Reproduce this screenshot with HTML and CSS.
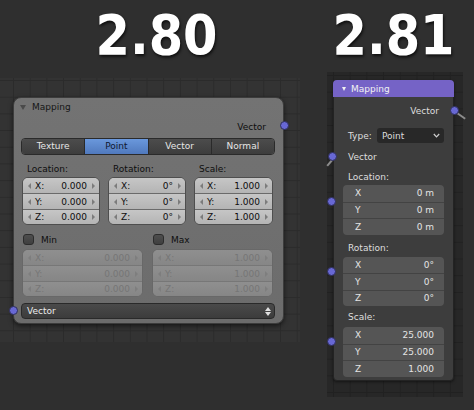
FILE: index.html
```html
<!DOCTYPE html>
<html>
<head>
<meta charset="utf-8">
<link rel="stylesheet" href="styles.css">
</head>
<body>
<div class="page">
  <div class="titles">
    <div class="title t80">2.80</div>
    <div class="title t81">2.81</div>
  </div>
  <div class="views">
    <div class="view old">
      <div class="node n280">
        <div class="hdr"><span class="tri"></span>Mapping</div>
        <div class="out-row">Vector<span class="sock sock-out"></span></div>
        <div class="tabs">
          <div class="tab">Texture</div>
          <div class="tab sel">Point</div>
          <div class="tab">Vector</div>
          <div class="tab">Normal</div>
        </div>
        <div class="cols3">
          <div class="col">
            <div class="lbl">Location:</div>
            <div class="fields">
              <div class="fld"><span class="al"></span><span class="k">X:</span><span class="v">0.000</span><span class="ar"></span></div>
              <div class="fld"><span class="al"></span><span class="k">Y:</span><span class="v">0.000</span><span class="ar"></span></div>
              <div class="fld"><span class="al"></span><span class="k">Z:</span><span class="v">0.000</span><span class="ar"></span></div>
            </div>
          </div>
          <div class="col">
            <div class="lbl">Rotation:</div>
            <div class="fields">
              <div class="fld"><span class="al"></span><span class="k">X:</span><span class="v">0°</span><span class="ar"></span></div>
              <div class="fld"><span class="al"></span><span class="k">Y:</span><span class="v">0°</span><span class="ar"></span></div>
              <div class="fld"><span class="al"></span><span class="k">Z:</span><span class="v">0°</span><span class="ar"></span></div>
            </div>
          </div>
          <div class="col">
            <div class="lbl">Scale:</div>
            <div class="fields">
              <div class="fld"><span class="al"></span><span class="k">X:</span><span class="v">1.000</span><span class="ar"></span></div>
              <div class="fld"><span class="al"></span><span class="k">Y:</span><span class="v">1.000</span><span class="ar"></span></div>
              <div class="fld"><span class="al"></span><span class="k">Z:</span><span class="v">1.000</span><span class="ar"></span></div>
            </div>
          </div>
        </div>
        <div class="cols2">
          <div class="col">
            <div class="chk"><span class="box"></span>Min</div>
            <div class="fields dis">
              <div class="fld"><span class="al"></span><span class="k">X:</span><span class="v">0.000</span><span class="ar"></span></div>
              <div class="fld"><span class="al"></span><span class="k">Y:</span><span class="v">0.000</span><span class="ar"></span></div>
              <div class="fld"><span class="al"></span><span class="k">Z:</span><span class="v">0.000</span><span class="ar"></span></div>
            </div>
          </div>
          <div class="col">
            <div class="chk"><span class="box"></span>Max</div>
            <div class="fields dis">
              <div class="fld"><span class="al"></span><span class="k">X:</span><span class="v">1.000</span><span class="ar"></span></div>
              <div class="fld"><span class="al"></span><span class="k">Y:</span><span class="v">1.000</span><span class="ar"></span></div>
              <div class="fld"><span class="al"></span><span class="k">Z:</span><span class="v">1.000</span><span class="ar"></span></div>
            </div>
          </div>
        </div>
        <div class="dd-row">
          <span class="sock sock-in"></span>
          <div class="dd">Vector<span class="updown"><span class="up"></span><span class="dn"></span></span></div>
        </div>
      </div>
    </div>
    <div class="view new">
      <div class="node n281">
        <div class="hdr2"><span class="tri2"></span>Mapping</div>
        <div class="out2">Vector<span class="sock sock-out2"></span><span class="wire wire-out"></span></div>
        <div class="type-row"><span class="type-lbl">Type:</span><div class="sel2">Point<svg class="chev" width="7" height="5" viewBox="0 0 7 5"><path d="M0.8 1 L3.5 3.8 L6.2 1" fill="none" stroke="#cfcfcf" stroke-width="1.2"/></svg></div></div>
        <div class="in2"><span class="sock sock-in2"></span><span class="wire wire-in"></span>Vector</div>
        <div class="lbl2 l-loc">Location:</div>
        <div class="fields2 f-loc">
          <span class="sock sock-side"></span>
          <div class="f2"><span>X</span><span>0 m</span></div>
          <div class="f2"><span>Y</span><span>0 m</span></div>
          <div class="f2"><span>Z</span><span>0 m</span></div>
        </div>
        <div class="lbl2 l-rot">Rotation:</div>
        <div class="fields2 f-rot">
          <span class="sock sock-side s2"></span>
          <div class="f2"><span>X</span><span>0°</span></div>
          <div class="f2"><span>Y</span><span>0°</span></div>
          <div class="f2"><span>Z</span><span>0°</span></div>
        </div>
        <div class="lbl2 l-sc">Scale:</div>
        <div class="fields2 f-sc">
          <span class="sock sock-side s2"></span>
          <div class="f2"><span>X</span><span>25.000</span></div>
          <div class="f2"><span>Y</span><span>25.000</span></div>
          <div class="f2"><span>Z</span><span>1.000</span></div>
        </div>
      </div>
    </div>
  </div>
</div>
</body>
</html>
```

FILE: styles.css
```css
* { box-sizing: border-box; }
html, body { margin: 0; padding: 0; }
body {
  width: 474px;
  height: 410px;
  overflow: hidden;
  background: #2f2f2f;
  font-family: "DejaVu Sans", "Noto Sans", sans-serif;
  font-size: 9px;
}
.page { display: flex; flex-direction: column; }

.titles { display: flex; height: 72px; }
.title {
  font-family: "DejaVu Sans Condensed", "DejaVu Sans", sans-serif;
  font-stretch: condensed;
  font-weight: bold;
  font-size: 55px;
  line-height: 55px;
  color: #ffffff;
  text-align: center;
  padding-top: 8px;
  text-shadow: 1px 2px 3px rgba(0,0,0,0.7);
}
.t80 { width: 313px; }
.t81 { width: 161px; }

.views { display: flex; align-items: flex-start; }
.view { position: relative; }
.old {
  width: 300px;
  height: 264px;
  margin-top: 6px;
  background-color: #333333;
  background-image:
    linear-gradient(to right, #2b2b2b 1px, transparent 1px),
    linear-gradient(to bottom, #2b2b2b 1px, transparent 1px);
  background-size: 16.7px 16.7px;
  background-position: 13px 2px;
}
.new {
  width: 136px;
  height: 325px;
  margin-left: 27px;
  background-color: #272727;
  background-image:
    linear-gradient(to right, #212121 1px, transparent 1px),
    linear-gradient(to bottom, #212121 1px, transparent 1px);
  background-size: 16.7px 16.7px;
  background-position: 6px 3px;
}

.node { position: absolute; }

/* ---------- 2.80 node ---------- */
.n280 {
  left: 13px;
  top: 19px;
  width: 271px;
  height: 227px;
  background: linear-gradient(#737373, #6c6c6c);
  border: 1px solid #3c3c3c;
  border-radius: 8px;
  box-shadow: 0 2px 5px rgba(0,0,0,0.55);
  color: #0e0e0e;
}
.hdr {
  height: 18px;
  line-height: 18px;
  padding-left: 6px;
  display: flex;
  align-items: center;
  color: #161616;
  font-size: 9px;
}
.tri {
  width: 0; height: 0;
  border-left: 3px solid transparent;
  border-right: 3px solid transparent;
  border-top: 5px solid #4a4a4a;
  margin-right: 6px;
}
.out-row {
  position: relative;
  height: 16px;
  margin-top: 3px;
  line-height: 16px;
  text-align: right;
  padding-right: 17px;
}
.sock {
  position: absolute;
  width: 9px; height: 9px;
  border-radius: 50%;
  background: #6868d4;
  border: 1px solid #2e2e5a;
}
.sock-out { right: -6px; top: 2px; }

.tabs {
  display: flex;
  height: 17px;
  margin: 3px 8px 0 7px;
  border: 1px solid #2a2a2a;
  border-radius: 4px;
  overflow: hidden;
}
.tab {
  flex: 1;
  text-align: center;
  line-height: 15px;
  color: #e6e6e6;
  background: linear-gradient(#4c4c4c, #3d3d3d);
  border-left: 1px solid #2a2a2a;
}
.tab:first-child { border-left: none; }
.tab.sel { background: linear-gradient(#6a98dc, #5079bd); color: #101830; }

.cols3 {
  display: grid;
  grid-template-columns: 78px 78px 79px;
  column-gap: 8px;
  margin: 8px 0 0 8px;
}
.lbl {
  height: 12px;
  line-height: 12px;
  padding-left: 5px;
  margin-bottom: 2px;
}
.fields {
  border: 1px solid #4e4e4e;
  border-radius: 6px;
  overflow: hidden;
  background: linear-gradient(#c4c4c4, #b2b2b2);
}
.fld {
  height: 16px;
  display: flex;
  align-items: center;
  padding: 0 4px 0 5px;
  border-top: 1px solid #6a6a6a;
  background: linear-gradient(#c6c6c6, #b4b4b4);
}
.fld:first-child { border-top: none; height: 15px; }
.fields .fld:last-child { height: 15px; }
.al, .ar { width: 0; height: 0; border-top: 3px solid transparent; border-bottom: 3px solid transparent; }
.al { border-right: 3px solid #7c7c7c; }
.ar { border-left: 3px solid #7c7c7c; }
.k { margin-left: 4px; }
.v { flex: 1; text-align: right; margin-right: 5px; }

.cols2 {
  display: grid;
  grid-template-columns: 121px 121px;
  column-gap: 9px;
  margin: 9px 0 0 8px;
}
.chk {
  height: 11px;
  display: flex;
  align-items: center;
  margin-bottom: 4px;
  padding-left: 1px;
}
.box {
  width: 11px; height: 11px;
  border-radius: 3px;
  background: linear-gradient(#4e4e4e, #3f3f3f);
  border: 1px solid #2c2c2c;
  margin-right: 7px;
}
.fields.dis { border-color: #686868; background: #8a8a8a; }
.dis .fld { background: linear-gradient(#8f8f8f, #868686); border-top-color: #777777; color: #767676; }
.dis .al { border-right-color: #7e7e7e; }
.dis .ar { border-left-color: #7e7e7e; }

.dd-row {
  position: relative;
  margin: 6px 8px 0 7px;
}
.sock-in { left: -12px; top: 3px; }
.dd {
  height: 16px;
  border: 1px solid #2a2a2a;
  border-radius: 4px;
  background: linear-gradient(#4a4a4a, #3c3c3c);
  color: #ececec;
  line-height: 14px;
  padding-left: 5px;
  display: flex;
  align-items: center;
  justify-content: space-between;
}
.updown { display: flex; flex-direction: column; gap: 1px; margin-right: 3px; }
.up, .dn { width: 0; height: 0; border-left: 3px solid transparent; border-right: 3px solid transparent; }
.up { border-bottom: 4px solid #e0e0e0; }
.dn { border-top: 4px solid #e0e0e0; }

/* ---------- 2.81 node ---------- */
.n281 {
  left: 6px;
  top: 8px;
  width: 121px;
  height: 301px;
  background: #3d3d3d;
  border: 1px solid #232323;
  border-radius: 4px;
  color: #dedede;
  box-shadow: 0 1px 3px rgba(0,0,0,0.5);
}
.hdr2 {
  height: 17px;
  margin: -1px -1px 0 -1px;
  background: #7563c6;
  border-radius: 4px 4px 0 0;
  display: flex;
  align-items: center;
  padding-left: 9px;
  color: #f2f2f2;
}
.tri2 {
  width: 0; height: 0;
  border-left: 2.5px solid transparent;
  border-right: 2.5px solid transparent;
  border-top: 4px solid #f0f0f0;
  margin-right: 5px;
}
.out2 {
  position: relative;
  height: 16px;
  margin-top: 6px;
  line-height: 16px;
  text-align: right;
  padding-right: 14px;
}
.sock-out2 { right: -6px; top: 3px; z-index: 2; }
.wire { position: absolute; height: 2px; background: #8c8c8c; transform-origin: 0 50%; }
.wire-out { right: -14px; top: 9px; width: 10px; transform: rotate(35deg); }
.type-row {
  display: flex;
  align-items: center;
  margin-top: 9px;
  padding-left: 14px;
  height: 15px;
}
.type-lbl { width: 29px; }
.sel2 {
  width: 67px;
  height: 15px;
  background: #282828;
  border-radius: 3px;
  display: flex;
  align-items: center;
  justify-content: space-between;
  padding: 0 4px 0 5px;
  color: #dcdcdc;
}
.in2 {
  position: relative;
  height: 16px;
  line-height: 16px;
  margin-top: 6px;
  padding-left: 14px;
}
.sock-in2 { left: -6px; top: 3px; z-index: 2; }
.wire-in { left: -1px; top: 9px; width: 9px; transform: rotate(130deg); }
.lbl2 { height: 12px; line-height: 12px; padding-left: 14px; }
.l-loc { margin-top: 6px; }
.l-rot { margin-top: 7px; }
.l-sc { margin-top: 5px; }
.fields2 {
  position: relative;
  margin: 2px 9px 0 9px;
  background: #555555;
  border-radius: 4px;
}
.f-rot { margin-top: 3px; }
.f-sc { margin-top: 4px; }
.f2 {
  height: 16.5px;
  display: flex;
  align-items: center;
  justify-content: space-between;
  padding: 0 10px 0 12px;
  border-top: 1px solid #434343;
  color: #e4e4e4;
}
.f2:first-of-type { border-top: none; }
.sock-side { left: -16px; top: 12px; }
.sock-side.s2 { top: 10px; }
```
